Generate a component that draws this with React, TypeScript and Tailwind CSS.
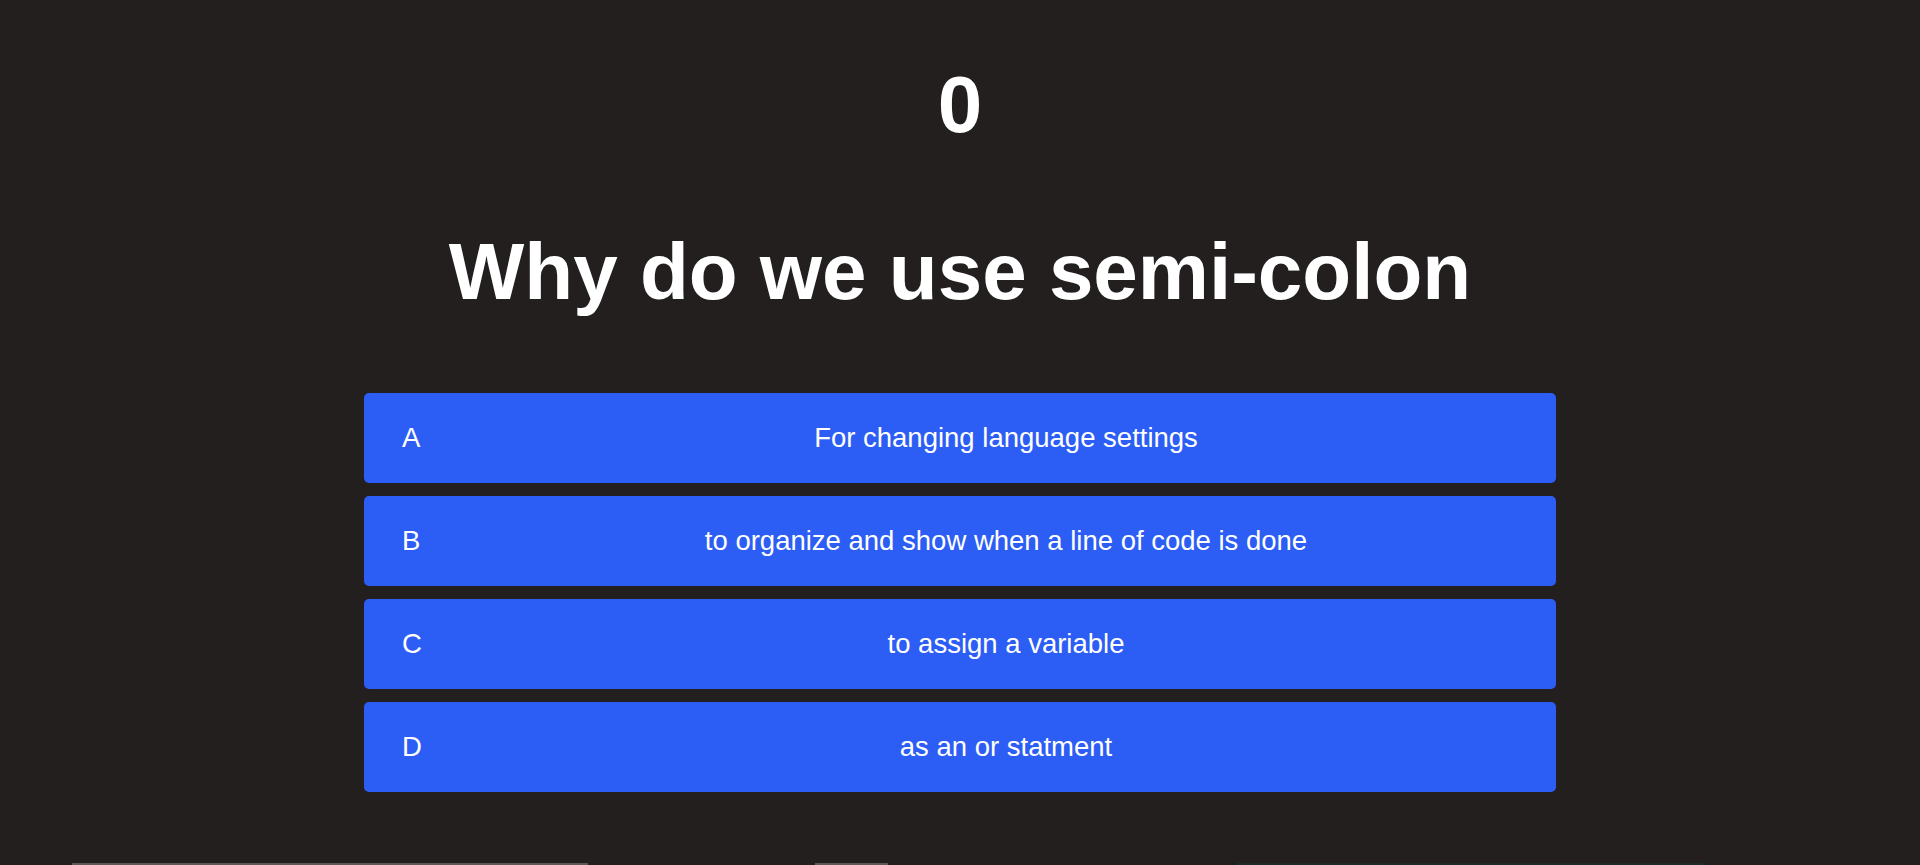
import React from "react";

const options = [
  { letter: "A", text: "For changing language settings" },
  { letter: "B", text: "to organize and show when a line of code is done" },
  { letter: "C", text: "to assign a variable" },
  { letter: "D", text: "as an or statment" },
];

export default function App() {
  return (
    <div
      className="relative w-full h-[865px] overflow-hidden bg-[#221f1e] text-white flex flex-col items-center"
      style={{ fontFamily: '"Liberation Sans", Arial, sans-serif' }}
    >
      <div className="pt-[59px] text-[80px] leading-[92px] font-bold">0</div>
      <h1 className="mt-[75px] text-[80px] leading-[92px] font-bold">Why do we use semi-colon</h1>
      <div className="mt-[75px] w-[1192px] flex flex-col gap-[13px]">
        {options.map((o) => (
          <div
            key={o.letter}
            className="h-[90px] rounded-[5px] bg-[#2c5df5] flex items-center px-[38px] text-[27.5px]"
          >
            <span className="w-[92px]">{o.letter}</span>
            <span className="flex-1 text-center">{o.text}</span>
          </div>
        ))}
      </div>
      <div className="absolute bottom-0 left-0 w-full h-[2px]">
        <div className="absolute left-[72px] w-[516px] h-[2px] bg-[#5b5857]" />
        <div className="absolute left-[815px] w-[73px] h-[2px] bg-[#5b5857]" />
        <div className="absolute left-[1237px] w-[467px] h-[2px] bg-[#1f2b2a]" />
      </div>
    </div>
  );
}
